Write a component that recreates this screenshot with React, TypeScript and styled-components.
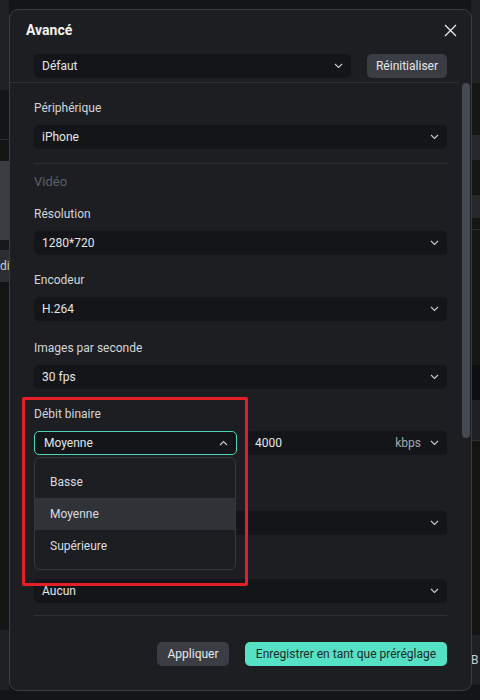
import React from 'react';
import styled, { createGlobalStyle } from 'styled-components';

const GlobalStyle = createGlobalStyle`
  html, body {
    margin: 0;
    padding: 0;
    background: #141516;
  }
  body {
    font-family: Roboto, "Noto Sans", sans-serif;
    -webkit-font-smoothing: antialiased;
  }
`;

const Screen = styled.div`
  position: relative;
  width: 480px;
  height: 700px;
  overflow: hidden;
  display: flex;
  justify-content: space-between;
  background: #141516;
`;

const Rail = styled.div`
  display: flex;
  flex-direction: column;
  width: 9px;
  overflow: hidden;
`;

const Band = styled.div<{ $h: number; $c: string }>`
  flex-shrink: 0;
  height: ${p => p.$h}px;
  background: ${p => p.$c};
  overflow: hidden;
  font-size: 12px;
  line-height: ${p => p.$h}px;
  color: #c9cdd1;
  white-space: nowrap;
`;

const Dialog = styled.div`
  position: absolute;
  left: 9px;
  top: 9px;
  width: 463px;
  height: 682px;
  box-sizing: border-box;
  border: 1px solid #3a3e44;
  border-radius: 9px;
  background: #1c1e21;
  display: flex;
  flex-direction: column;
`;

const Header = styled.div`
  height: 40px;
  padding: 0 14px 0 16px;
  display: flex;
  align-items: center;
  justify-content: space-between;
`;

const Title = styled.h2`
  margin: 0;
  font-size: 14px;
  font-weight: 700;
  color: #f2f3f5;
`;

const CloseButton = styled.button`
  border: none;
  background: none;
  padding: 0;
  width: 13px;
  height: 13px;
  display: flex;
  color: #e8eaec;
`;

const PresetRow = styled.div`
  margin-top: 4px;
  padding: 0 24px;
  display: flex;
  gap: 16px;
`;

const HeaderRule = styled.div`
  margin: 4px 13px 0 0;
  height: 1px;
  background: #2c3034;
`;

const Body = styled.div`
  padding: 17px 24px 0;
  display: flex;
  flex-direction: column;
`;

const Field = styled.div<{ $mt?: number }>`
  position: relative;
  margin-top: ${p => p.$mt ?? 0}px;
  display: flex;
  flex-direction: column;
`;

const Label = styled.div`
  height: 17px;
  font-size: 12px;
  line-height: 17px;
  color: #d3d6d9;
  margin-bottom: 8px;
`;

const Select = styled.div<{ $open?: boolean }>`
  flex: 1 1 0;
  min-height: 24px;
  height: 24px;
  box-sizing: border-box;
  padding: 0 8px 0 ${p => (p.$open ? 9 : 8)}px;
  border-radius: 5px;
  background: #131518;
  border: ${p => (p.$open ? '1px solid #4fd4b7' : 'none')};
  display: flex;
  align-items: center;
  justify-content: space-between;
  font-size: 12px;
  color: #e4e6e8;
`;

const Unit = styled.span`
  margin-left: auto;
  margin-right: 9px;
  color: #a3a8ad;
`;

const Rule = styled.div<{ $mt: number }>`
  margin-top: ${p => p.$mt}px;
  height: 1px;
  background: #2c3034;
`;

const Section = styled.div`
  margin: 9px 0 15px;
  font-size: 13px;
  line-height: 18px;
  color: #5b6168;
`;

const Pair = styled.div`
  display: flex;
  gap: 10px;
`;

const Menu = styled.div`
  position: absolute;
  top: 51px;
  left: 0;
  width: 202px;
  height: 113px;
  box-sizing: border-box;
  padding: 8px 0;
  border: 1px solid #34383d;
  border-radius: 6px;
  background: #1c1e21;
  z-index: 2;
`;

const MenuItem = styled.div<{ $active?: boolean }>`
  height: 32px;
  padding-left: 15px;
  display: flex;
  align-items: center;
  font-size: 12px;
  color: #dadde0;
  background: ${p => (p.$active ? '#2f3236' : 'transparent')};
`;

const Footer = styled.div`
  padding: 26px 24px 0;
  display: flex;
  justify-content: flex-end;
  gap: 16px;
`;

const Button = styled.button<{ $primary?: boolean; $w: number }>`
  width: ${p => p.$w}px;
  height: 24px;
  border: none;
  border-radius: 5px;
  padding: 0;
  font-family: inherit;
  font-size: 12px;
  background: ${p => (p.$primary ? '#55e2c4' : '#3a3e44')};
  color: ${p => (p.$primary ? '#1d2b29' : '#e6e8ea')};
`;

const Scrollbar = styled.div`
  position: absolute;
  left: 452px;
  top: 73px;
  width: 8px;
  height: 355px;
  border-radius: 4px;
  background: #454a51;
`;

const Highlight = styled.div`
  position: absolute;
  left: 22px;
  top: 397px;
  width: 226px;
  height: 189px;
  box-sizing: border-box;
  border: 3px solid #e41f26;
  border-radius: 2px;
  z-index: 3;
`;

function Chevron({ up }: { up?: boolean }) {
  return (
    <svg width="9" height="6" viewBox="0 0 9 6" fill="none">
      <polyline
        points={up ? '1,5 4.5,1.5 8,5' : '1,1 4.5,4.5 8,1'}
        stroke="#c9ccd0"
        strokeWidth="1.1"
      />
    </svg>
  );
}

const leftBands: [number, string, string?][] = [
  [90, '#1f2124'],
  [49, '#141516'],
  [1, '#2a2c2e'],
  [21, '#131414'],
  [79, '#3a3e42'],
  [10, '#161718'],
  [32, '#2a2d31', 'di'],
  [348, '#131414'],
  [60, '#1e2023'],
  [10, '#141516'],
];

const rightBands: [number, string, string?][] = [
  [83, '#1f2124'],
  [52, '#151616'],
  [25, '#262829'],
  [35, '#151616'],
  [23, '#262829'],
  [11, '#151616'],
  [1, '#2d2f31'],
  [135, '#151616'],
  [35, '#0c0e10'],
  [40, '#1d1f22'],
  [1, '#2d2f31'],
  [194, '#141412'],
  [50, '#1e2023', 'B'],
  [15, '#141516'],
];

const fields = [
  { label: 'Encodeur', value: 'H.264', mt: 17 },
  { label: 'Images par seconde', value: '30 fps', mt: 19 },
];

export default function App() {
  return (
    <>
      <GlobalStyle />
      <Screen>
        <Rail>
          {leftBands.map(([h, c, t], i) => (
            <Band key={i} $h={h} $c={c}>{t}</Band>
          ))}
        </Rail>
        <Rail>
          {rightBands.map(([h, c, t], i) => (
            <Band key={i} $h={h} $c={c}>{t}</Band>
          ))}
        </Rail>

        <Dialog>
          <Header>
            <Title>Avancé</Title>
            <CloseButton aria-label="Fermer">
              <svg width="13" height="13" viewBox="0 0 13 13">
                <path d="M1 1L12 12M12 1L1 12" stroke="currentColor" strokeWidth="1.3" />
              </svg>
            </CloseButton>
          </Header>
          <PresetRow>
            <Select>
              Défaut
              <Chevron />
            </Select>
            <Button $w={80}>Réinitialiser</Button>
          </PresetRow>
          <HeaderRule />

          <Body>
            <Field>
              <Label>Périphérique</Label>
              <Select>
                iPhone
                <Chevron />
              </Select>
            </Field>
            <Rule $mt={14} />
            <Section>Vidéo</Section>
            <Field>
              <Label>Résolution</Label>
              <Select>
                1280*720
                <Chevron />
              </Select>
            </Field>
            {fields.map(f => (
              <Field key={f.label} $mt={f.mt}>
                <Label>{f.label}</Label>
                <Select>
                  {f.value}
                  <Chevron />
                </Select>
              </Field>
            ))}
            <Field $mt={17}>
              <Label>Débit binaire</Label>
              <Pair>
                <Select $open>
                  Moyenne
                  <Chevron up />
                </Select>
                <Select>
                  4000
                  <Unit>kbps</Unit>
                  <Chevron />
                </Select>
              </Pair>
              <Menu>
                <MenuItem>Basse</MenuItem>
                <MenuItem $active>Moyenne</MenuItem>
                <MenuItem>Supérieure</MenuItem>
              </Menu>
            </Field>
            {/* labels and value under the open menu are hidden in the capture */}
            <Field $mt={31}>
              <Label />
              <Select>
                <span />
                <Chevron />
              </Select>
            </Field>
            <Field $mt={19}>
              <Label />
              <Select>
                Aucun
                <Chevron />
              </Select>
            </Field>
            <Rule $mt={12} />
          </Body>

          <Footer>
            <Button $w={72}>Appliquer</Button>
            <Button $primary $w={202}>Enregistrer en tant que préréglage</Button>
          </Footer>
          <Scrollbar />
        </Dialog>
        <Highlight />
      </Screen>
    </>
  );
}
